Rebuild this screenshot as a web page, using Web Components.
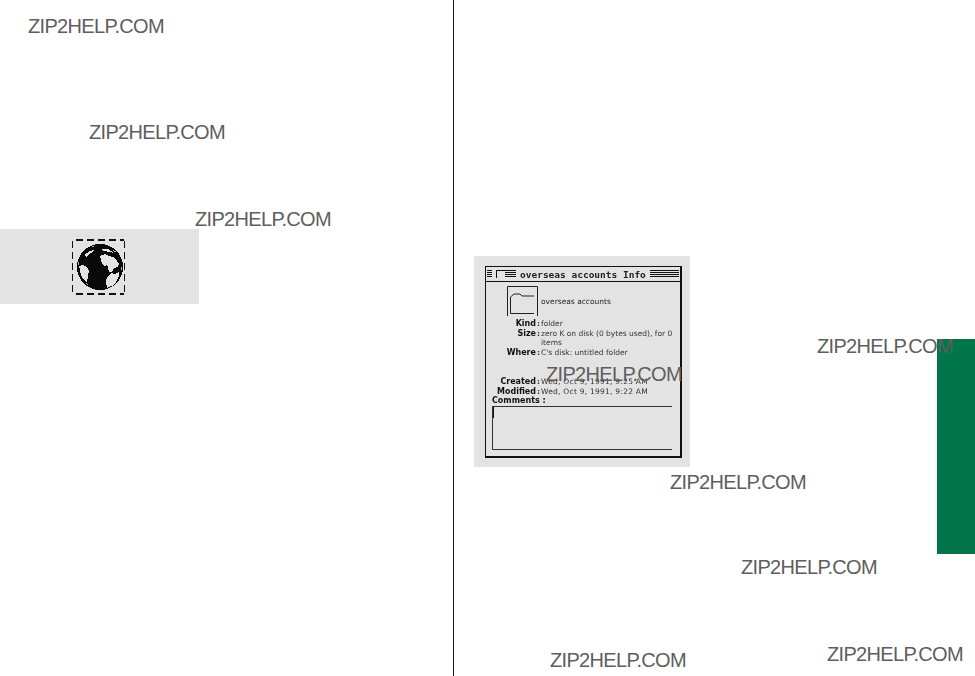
<!DOCTYPE html>
<html lang="en">
<head>
<meta charset="utf-8">
<title>overseas accounts Info</title>
<style>
  html, body { margin: 0; padding: 0; background: #fff; }
  body { width: 975px; height: 676px; overflow: hidden; font-family: "Liberation Sans", Arial, sans-serif; }
</style>
</head>
<body>
<manual-page>
  <map-figure slot="left"></map-figure>
  <info-window slot="right">
    <info-row label="Kind">folder</info-row>
    <info-row label="Size">zero K on disk (0 bytes used), for 0 items</info-row>
    <info-row label="Where">C's disk: untitled folder</info-row>
    <info-row label="Created" gap wide>Wed, Oct 9, 1991, 9:25 AM</info-row>
    <info-row label="Modified" wide>Wed, Oct 9, 1991, 9:22 AM</info-row>
  </info-window>
  <water-mark x="28" y="15"></water-mark>
  <water-mark x="89" y="121"></water-mark>
  <water-mark x="195" y="208"></water-mark>
  <water-mark x="817" y="335"></water-mark>
  <water-mark x="546" y="363"></water-mark>
  <water-mark x="670" y="471"></water-mark>
  <water-mark x="741" y="556"></water-mark>
  <water-mark x="550" y="649"></water-mark>
  <water-mark x="827" y="643"></water-mark>
</manual-page>

<script>
// Pagina do manual: duas colunas, separador e aba verde na borda
class ManualPage extends HTMLElement {
  constructor() {
    super();
    this.attachShadow({ mode: 'open' });
    this.shadowRoot.innerHTML = `
      <style>
        :host { display: block; position: relative; width: 975px; height: 676px; overflow: hidden; }
        .cols { display: grid; grid-template-columns: 453px 1px 1fr; height: 100%; }
        .left { padding-top: 229px; }
        .rule { background: #1a1a1a; }
        .right { padding: 256px 0 0 20px; }
        .tab { position: absolute; left: 937px; top: 339px; width: 38px; height: 215px; background: #00764a; }
      </style>
      <div class="cols">
        <div class="left"><slot name="left"></slot></div>
        <div class="rule"></div>
        <div class="right"><slot name="right"></slot></div>
      </div>
      <div class="tab"></div>
      <slot></slot>
    `;
  }
}

// Figura cinza com o icone do globo selecionado
class MapFigure extends HTMLElement {
  constructor() {
    super();
    this.attachShadow({ mode: 'open' });
    this.shadowRoot.innerHTML = `
      <style>
        :host { display: flex; align-items: center; justify-content: center; box-sizing: border-box; width: 199px; height: 75px; padding-right: 4px; background: #e3e3e3; }
        svg { display: block; }
      </style>
      <svg width="54" height="56" viewBox="0 0 54 56" shape-rendering="crispEdges" aria-hidden="true">
        <path d="M5 1H53M5 55H53" fill="none" stroke="#111" stroke-width="2" stroke-dasharray="7 4"/>
        <path d="M1 2V54M53 2V54" fill="none" stroke="#111" stroke-width="1" stroke-dasharray="7 4"/>
        <circle cx="29" cy="28" r="23" fill="#0a0a0a"/>
        <circle cx="29" cy="28" r="21.5" fill="none" stroke="#e3e3e3" stroke-width="0.8" stroke-dasharray="3 20"/>
        <g fill="#e3e3e3">
          <path d="M29 17 34 15 38 17 44 19 48 25 47 28 43 29 41 33 38 33 37 28 35 26 34 28 31 25 30 21Z"/>
          <path d="M35 43 36 38 40 34 44 35 48 33 48 37 45 43 41 47 36 48Z"/>
          <path d="M8 27 12 26 16 28 18 32 17 37 16 43 13 41 10 36Z"/>
          <path d="M13 16 19 12 23 11 22 13 18 15 15 18Z"/>
          <path d="M30 10 37 10 43 14 38 13 33 12Z"/>
        </g>
      </svg>
    `;
  }
}

// Janela "Get Info" do Finder
class InfoWindow extends HTMLElement {
  constructor() {
    super();
    this.attachShadow({ mode: 'open' });
    this.shadowRoot.innerHTML = `
      <style>
        :host { display: block; box-sizing: border-box; width: 216px; height: 211px; padding: 10px 8px 9px 11px; background: #e3e3e3; }
        .win {
          box-sizing: border-box; height: 100%; display: flex; flex-direction: column;
          border: 1px solid #111; border-width: 1px 2px 2px 1px;
          font-family: "DejaVu Sans", sans-serif; color: #222;
        }
        .bar {
          display: flex; align-items: center; height: 14px; padding: 0 1px 0 1px;
          border-bottom: 1px solid #111;
        }
        .stripes {
          height: 8px;
          background: repeating-linear-gradient(#111 0 1px, transparent 1px 2px);
        }
        .stripes.l { flex: 0 0 5px; }
        .stripes.m { flex: 0 0 11px; }
        .stripes.r { flex: 1; }
        .close { flex: 0 0 9px; height: 8px; margin-left: 4px; border: solid #111; border-width: 1px 0 0 1px; box-sizing: border-box; }
        .title { font: bold 9.5px "DejaVu Sans Mono", monospace; white-space: nowrap; color: #222; margin: 0 4px; filter: blur(.25px); }
        .head { display: flex; align-items: center; gap: 3px; margin: 4px 0 0 21px; }
        .icon { width: 31px; height: 30px; display: block; }
        .name { font-size: 7.5px; filter: blur(.3px); }
        .rows { margin-top: 3px; filter: blur(.3px); }
        .lbl { font: bold 8px "DejaVu Sans", sans-serif; color: #111; height: 9px; line-height: 9px; margin: -1px 0 0 6px; filter: blur(.2px); }
        .box {
          box-sizing: border-box; height: 44px; margin: 1px 8px 0 6px;
          border: solid #333; border-width: 1px 0 1px 1px;
        }
        .caret { width: 1px; height: 11px; background: #111; }
      </style>
      <div class="win">
        <div class="bar">
          <span class="stripes l"></span>
          <span class="close"></span>
          <span class="stripes m"></span>
          <span class="title">overseas accounts Info</span>
          <span class="stripes r"></span>
        </div>
        <div class="head">
          <svg class="icon" viewBox="0 0 31 30" aria-hidden="true">
            <path d="M.5 30V.5H30.5V30" fill="none" stroke="#222"/>
            <path d="M3.5 27.5V11L7 8H13L15 10H27M3.5 27.5H27" fill="none" stroke="#222"/>
          </svg>
          <span class="name">overseas accounts</span>
        </div>
        <div class="rows"><slot></slot></div>
        <div class="lbl">Comments :</div>
        <div class="box"><div class="caret"></div></div>
      </div>
    `;
  }
}

// Linha rotulo : valor dentro da janela
class InfoRow extends HTMLElement {
  constructor() {
    super();
    this.attachShadow({ mode: 'open' });
    this.shadowRoot.innerHTML = `
      <style>
        :host { display: grid; grid-template-columns: 50px 5px 135px; font: 7.5px/9.6px "DejaVu Sans", sans-serif; color: #333; }
        :host([gap]) { margin-top: 20px; }
        :host([wide]) .v { letter-spacing: .25px; }
        .k { text-align: right; font-weight: bold; font-size: 8px; color: #111; }
        .c { text-align: center; font-weight: bold; }
      </style>
      <span class="k"></span><span class="c">:</span><span class="v"><slot></slot></span>
    `;
    this.shadowRoot.querySelector('.k').textContent = this.getAttribute('label');
  }
}

// Marca d'agua sobre a pagina
class WaterMark extends HTMLElement {
  constructor() {
    super();
    this.attachShadow({ mode: 'open' });
    this.shadowRoot.innerHTML = `
      <style>
        :host { position: absolute; font: 20px/23px "Liberation Sans", Arial, sans-serif; letter-spacing: -0.68px; color: #5e5e5e; white-space: nowrap; }
      </style>
      ZIP2HELP.COM
    `;
  }
  connectedCallback() {
    this.style.left = this.getAttribute('x') + 'px';
    this.style.top = this.getAttribute('y') + 'px';
  }
}

customElements.define('manual-page', ManualPage);
customElements.define('map-figure', MapFigure);
customElements.define('info-window', InfoWindow);
customElements.define('info-row', InfoRow);
customElements.define('water-mark', WaterMark);
</script>
</body>
</html>
